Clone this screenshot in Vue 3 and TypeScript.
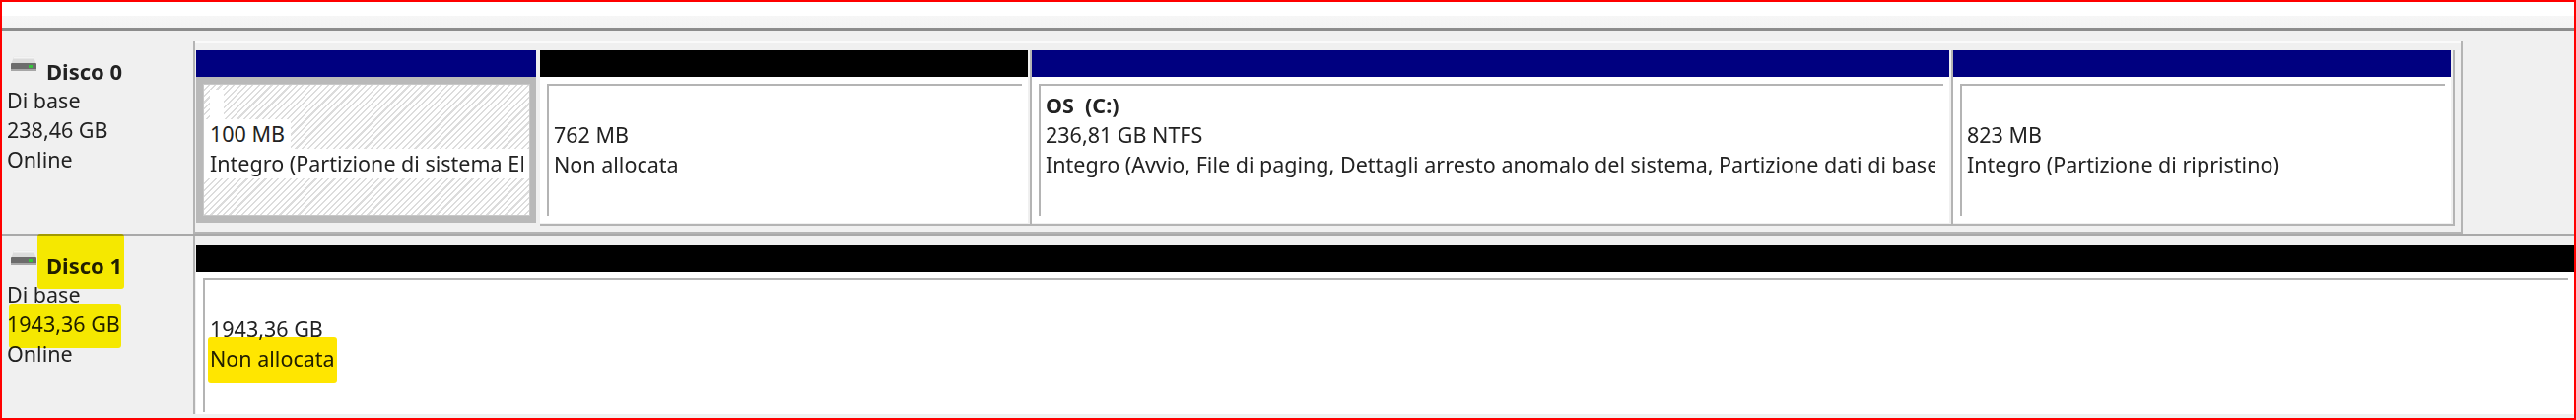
<template>
  <div class="frame">
    <div class="content">
      <div class="toolbar"></div>

      <div v-for="disk in disks" :key="disk.name" :class="['disk', { wide: disk.wide }]">
        <div class="label">
          <div class="name-row">
            <svg class="hdd" viewBox="0 0 26 16" width="26" height="16">
              <path d="M3 0.5h20l2.5 7h-25z" fill="#dcdcdc" />
              <path d="M3 0.5h20l0.6 2h-21.2z" fill="#f4f4f4" />
              <rect x="0" y="7" width="26" height="8" rx="1" fill="#6c6c6c" />
              <rect x="0" y="13" width="26" height="2" fill="#a6a6a6" />
              <rect x="18" y="9" width="4" height="3" fill="#35c43c" />
            </svg>
            <b :class="{ 'mark mark-name': disk.wide }">{{ disk.name }}</b>
          </div>
          <div>Di base</div>
          <div><span :class="{ 'mark mark-size': disk.wide }">{{ disk.size }}</span></div>
          <div>Online</div>
        </div>

        <div class="map">
          <div
            v-for="part in disk.parts"
            :key="part.size"
            :class="['part', { selected: part.selected }]"
            :style="{ width: part.width ? part.width + 'px' : undefined }"
          >
            <div :class="['bar', part.color]"></div>
            <div class="body">
              <div class="inner">
                <div class="line title">
                  <b v-if="part.title">{{ part.title }}</b>
                  <span v-else-if="part.selected" class="blank">&nbsp;</span>
                </div>
                <div class="line"><span class="text">{{ part.size }}</span></div>
                <div class="line">
                  <span :class="['text', { 'mark mark-status': disk.wide }]">{{ part.status }}</span>
                </div>
              </div>
            </div>
          </div>
        </div>
      </div>
    </div>
  </div>
</template>

<script setup lang="ts">
interface Partition {
  title?: string
  size: string
  status: string
  color: 'navy' | 'black'
  width?: number
  selected?: boolean
}

interface Disk {
  name: string
  size: string
  wide?: boolean
  parts: Partition[]
}

const disks: Disk[] = [
  {
    name: 'Disco 0',
    size: '238,46 GB',
    parts: [
      { size: '100 MB', status: 'Integro (Partizione di sistema EFI)', color: 'navy', width: 349, selected: true },
      { size: '762 MB', status: 'Non allocata', color: 'black', width: 500 },
      {
        title: 'OS  (C:)',
        size: '236,81 GB NTFS',
        status: 'Integro (Avvio, File di paging, Dettagli arresto anomalo del sistema, Partizione dati di base)',
        color: 'navy',
        width: 935,
      },
      { size: '823 MB', status: 'Integro (Partizione di ripristino)', color: 'navy', width: 510 },
    ],
  },
  {
    name: 'Disco 1',
    size: '1943,36 GB',
    wide: true,
    parts: [{ size: '1943,36 GB', status: 'Non allocata', color: 'black' }],
  },
]
</script>

<style scoped>
.frame {
  width: 2614px;
  height: 426px;
  box-sizing: border-box;
  border: 2px solid #f00;
  background: #f0f0f0;
  overflow: hidden;
  font-family: "Noto Sans", "Open Sans", sans-serif;
  font-size: 21.5px;
  line-height: 30px;
  color: #222;
}

.content {
  filter: blur(0.5px);
}

.toolbar {
  height: 26px;
  background: linear-gradient(#fff 0, #fff 14px, #f6f6f6 14px, #f3f3f3 26px);
  border-bottom: 3px solid #8c8c8c;
  margin-bottom: 11px;
}

.disk {
  display: flex;
  height: 195px;
  border-bottom: 2px solid #a9a9a9;
}

.disk.wide {
  height: 181px;
  border-bottom: none;
}

.label {
  width: 194px;
  flex: none;
  box-sizing: border-box;
  padding: 15px 0 0 5px;
}

.name-row {
  display: flex;
  align-items: flex-start;
  gap: 10px;
  padding-left: 4px;
}

.name-row b {
  font-size: 22px;
}

.hdd {
  flex: none;
}

.map {
  width: 2303px;
  box-sizing: border-box;
  display: flex;
  padding: 9px 6px 0 1px;
  border-left: 2px solid #b4b4b4;
  border-right: 2px solid #b4b4b4;
  border-bottom: 2px solid #b4b4b4;
  box-shadow: inset 0 2px 0 #fafafa;
}

.wide .map {
  flex: 1;
  padding: 10px 0 0 1px;
  border-right: none;
  border-bottom: none;
  box-shadow: none;
}

.part {
  box-sizing: border-box;
  height: 178px;
  padding-right: 2px;
  border-right: 2px solid #b4b4b4;
  border-bottom: 2px solid #b4b4b4;
}

.wide .part {
  flex: 1;
  height: 171px;
  padding: 0;
  border: none;
}

.bar {
  height: 27px;
}

.bar.navy {
  background: #000080;
}

.bar.black {
  background: #000;
}

.body {
  height: 148px;
  box-sizing: border-box;
  padding: 7px 6px 0 7px;
  background: #fff;
}

.wide .body {
  height: 144px;
  padding-top: 6px;
}

.inner {
  height: 134px;
  box-sizing: border-box;
  padding: 5px 0 0 5px;
  border-top: 2px solid #b4b4b4;
  border-left: 2px solid #b4b4b4;
}

.wide .inner {
  height: 136px;
}

.line {
  height: 30px;
  margin-right: 8px;
  white-space: pre;
  overflow: hidden;
}

.wide .line {
  overflow: visible;
}

.text {
  display: inline-block;
}

.selected {
  border-right-color: transparent;
  border-bottom-color: transparent;
}

.selected .body {
  background: #b9b9b9;
}

.selected .inner {
  padding: 5px 0 0 0;
  border: 1px solid #c8c8c8;
  background: repeating-linear-gradient(135deg, #fff 0, #fff 3px, #dcdcdc 3px, #dcdcdc 4.5px);
}

.selected .line {
  display: flex;
  margin-right: 0;
}

.selected .text {
  box-sizing: border-box;
  max-width: 100%;
  overflow: hidden;
  padding-left: 6px;
  border-right: 6px solid #fff;
  background: #fff;
}

.selected .blank {
  display: inline-block;
  width: 14px;
  margin-left: 6px;
  background: #fff;
}

.mark {
  position: relative;
}

.mark::after {
  content: '';
  position: absolute;
  mix-blend-mode: multiply;
  border-radius: 3px;
}

.mark-name::after {
  inset: -17px -2px -9px -9px;
  background: #f5e800;
}

.mark-size::after {
  inset: -6px -1px -10px 2px;
  background: #f5e800;
}

.mark-status::after {
  inset: -7px -2px -9px -2px;
  background: #ffe600;
}
</style>
